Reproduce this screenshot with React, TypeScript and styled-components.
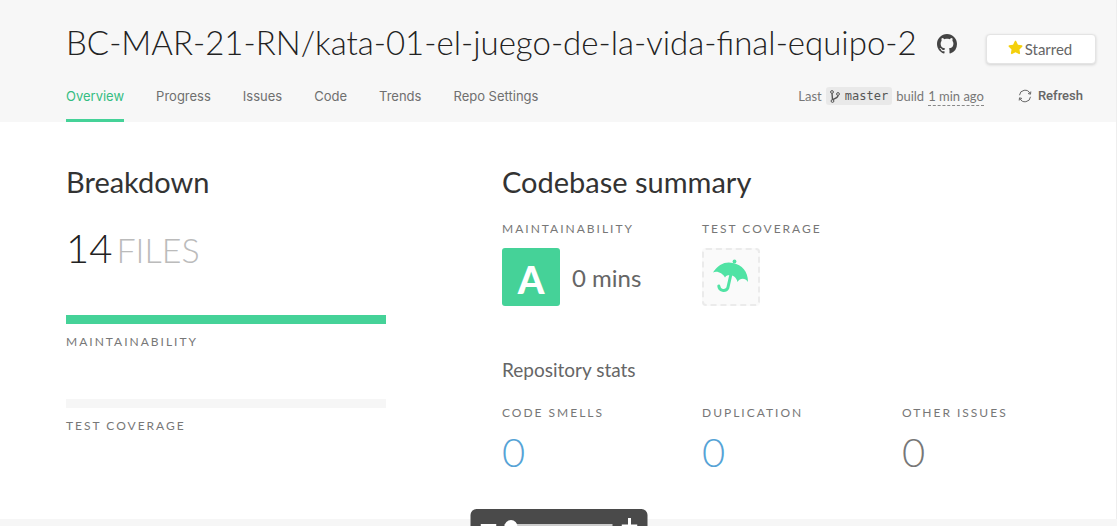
import React from "react";
import styled, { createGlobalStyle, css } from "styled-components";
import { FaStar } from "react-icons/fa";

const sans = `"Lato", "Liberation Sans", sans-serif`;

const GlobalStyle = createGlobalStyle`
  * { box-sizing: border-box; }
  html { background: #f6f6f6; }
  body { margin: 0; font-family: ${sans}; color: #666; overflow-x: hidden; }
  h1, h2, h3, p, dl, dd, dt { margin: 0; font-weight: 400; }
  a { color: inherit; text-decoration: none; }
  button { font-family: inherit; cursor: pointer; }
`;

const Page = styled.div`
  border-right: 1px solid #eee;
`;

const Header = styled.header`
  background: #f7f7f7;
  padding: 18px 20px 0 66px;
`;

const TitleRow = styled.div`
  display: flex;
  align-items: center;
  height: 48px;
`;

const Title = styled.h1`
  && { font-weight: 300; }
  font-size: 33px;
  line-height: 48px;
  color: #222;
  white-space: nowrap;
`;

const RepoLink = styled.a`
  display: flex;
  margin: 4px 0 0 20px;
  color: #444;
`;

const StarButton = styled.button`
  display: flex;
  flex-shrink: 0;
  align-items: center;
  justify-content: center;
  gap: 2px;
  width: 110px;
  height: 30px;
  margin-left: auto;
  margin-top: 14px;
  padding: 0 2px 0 0;
  border: 1px solid #e4e4e4;
  border-radius: 4px;
  background: #fff;
  box-shadow: 0 1px 3px rgba(0, 0, 0, 0.15);
  font-size: 15px;
  color: #666;
  svg { color: #f4d00c; margin-bottom: 4px; }
`;

const NavRow = styled.div`
  display: flex;
  justify-content: space-between;
  margin-top: 16px;
  padding-right: 13px;
  font-size: 13px;
  line-height: 28px;
`;

const Tabs = styled.nav`
  display: flex;
  gap: 32px;
`;

const Tab = styled.a<{ $active?: boolean }>`
  height: 40px;
  border-bottom: 3px solid ${(p) => (p.$active ? "#45d298" : "transparent")};
  color: ${(p) => (p.$active ? "#35bd82" : "#6f6f6f")};
  font-family: Inter, sans-serif;
`;

const BuildInfo = styled.div`
  display: flex;
  align-items: center;
  height: 28px;
  gap: 4px;
  color: #777;
`;

const Branch = styled.code`
  display: flex;
  align-items: center;
  gap: 5px;
  height: 18px;
  padding: 0 4px;
  border-radius: 3px;
  background: #e9e9e9;
  font: 12px/18px "DejaVu Sans Mono", monospace;
  color: #555;
`;

const BuildLink = styled.a`
  line-height: 18px;
  border-bottom: 1px dashed #888;
`;

const RefreshButton = styled.button`
  display: flex;
  align-items: center;
  gap: 6px;
  margin-left: 30px;
  padding: 0;
  border: 0;
  background: none;
  font: 500 13px/28px Roboto, sans-serif;
  color: #666;
`;

const Main = styled.main`
  display: grid;
  grid-template-columns: minmax(0, 8fr) minmax(0, 15fr);
  column-gap: 116px;
  padding: 42px 14px 43px 66px;
  background: #fff;
`;

const Heading = styled.h2`
  font-size: 29px;
  line-height: 36px;
  color: #333;
`;

const FileCount = styled.p`
  display: flex;
  align-items: baseline;
  gap: 4px;
  && { font-weight: 300; margin-top: 20px; }
  font-size: 40px;
  line-height: 56px;
  color: #222;
  span { font-size: 34px; color: #bbb; }
`;

const Meter = styled.figure<{ $filled?: boolean }>`
  margin: 0;
  &::before {
    content: "";
    display: block;
    height: 9px;
    background: ${(p) => (p.$filled ? "#45d298" : "#f6f6f6")};
  }
`;

const Meters = styled.div`
  display: grid;
  gap: 49px;
  margin-top: 37px;
`;

const label = css`
  font-size: 12px;
  line-height: 16px;
  letter-spacing: 2px;
  text-transform: uppercase;
  color: #777;
`;

const MeterLabel = styled.figcaption`
  ${label}
  margin-top: 10px;
`;

const Stats = styled.dl`
  display: grid;
  grid-template-columns: repeat(3, 1fr);
`;

const Term = styled.dt`
  ${label}
`;

const Rating = styled.dd`
  display: flex;
  align-items: center;
  gap: 12px;
  && { margin-top: 11px; }
  font-size: 24px;
`;

const Grade = styled.span`
  display: flex;
  align-items: center;
  justify-content: center;
  width: 58px;
  height: 58px;
  padding-top: 4px;
  border-radius: 3px;
  background: #45d298;
  color: #fff;
  font: 900 38px/54px ${sans};
`;

const CoverageLink = styled.a`
  display: flex;
  align-items: center;
  justify-content: center;
  width: 58px;
  height: 58px;
  border: 2px dashed #ebebeb;
  border-radius: 4px;
  background: #fafafa;
  color: #50e3a4;
`;

const Ratings = styled(Stats)`
  && { margin-top: 21px; }
`;

const Subheading = styled.h3`
  && { margin: 52px 0 23px; }
  font-size: 19px;
  line-height: 24px;
`;

const Count = styled.dd<{ $link?: boolean }>`
  && { margin-top: 7px; font-weight: 300; }
  font-size: 40px;
  line-height: 48px;
  color: ${(p) => (p.$link ? "#56a3d6" : "#777")};
`;

const ZoomBar = styled.div`
  position: fixed;
  left: 50%;
  bottom: -17px;
  transform: translateX(-50%);
  display: flex;
  align-items: center;
  justify-content: space-between;
  width: 177px;
  height: 34px;
  padding: 0 10px;
  border-radius: 6px;
  background: #4a4a4a;
`;

const ZoomButton = styled.button`
  display: flex;
  padding: 0;
  border: 0;
  background: none;
  color: #fff;
`;

const ZoomRange = styled.input`
  appearance: none;
  width: 108px;
  height: 4px;
  margin: 0;
  background: #ccc;
  &::-webkit-slider-thumb {
    appearance: none;
    width: 13px;
    height: 13px;
    border-radius: 50%;
    background: #fff;
  }
`;

const GithubIcon = () => (
  <svg width="20" height="20" viewBox="0 0 16 16" fill="currentColor" aria-hidden="true">
    <path d="M8 0C3.580 0 0 3.580 0 8c0 3.540 2.290 6.530 5.470 7.590.4.070.55-.17.55-.38 0-.19-.01-.82-.01-1.490-2.010.37-2.530-.49-2.690-.94-.09-.23-.48-.94-.82-1.130-.28-.15-.68-.52-.01-.53.63-.01 1.080.58 1.230.82.72 1.210 1.870.87 2.330.66.07-.52.28-.87.51-1.070-1.780-.2-3.640-.89-3.640-3.950 0-.87.31-1.590.82-2.150-.08-.2-.36-1.020.08-2.120 0 0 .67-.21 2.200.82.64-.18 1.320-.27 2-.27s1.360.09 2 .27c1.530-1.040 2.200-.82 2.200-.82.44 1.100.16 1.920.08 2.120.51.56.82 1.270.82 2.150 0 3.070-1.870 3.750-3.650 3.950.29.25.54.73.54 1.480 0 1.070-.01 1.930-.01 2.200 0 .21.15.46.55.38A8.013 8.013 0 0 0 16 8c0-4.420-3.580-8-8-8z" />
  </svg>
);

const UmbrellaIcon = () => (
  <svg width="36" height="36" viewBox="0 0 36 36" fill="currentColor" aria-hidden="true">
    <circle cx="21.5" cy="2.5" r="1.9" />
    <path d="M0 13.500C5 5 13 2 20 4C29 6 35 12 35 23C32 18.500 27 19 24.500 23C23 16 15 14 12 18.500C9.500 14 4 11.500 0 13.500z" />
    <path d="M18 15L14.800 29A4.800 4.800 0 0 1 5.800 27" fill="none" stroke="currentColor" strokeWidth="3" strokeLinecap="round" />
  </svg>
);

const BranchIcon = () => (
  <svg width="10" height="13" viewBox="0 0 10 13" fill="none" stroke="currentColor" aria-hidden="true">
    <circle cx="2" cy="2" r="1.4" />
    <circle cx="2.5" cy="11" r="1.4" />
    <circle cx="8" cy="4" r="1.4" />
    <path d="M2 3.5l.5 6M8 5.5c0 2.500-4 3-5.500 4.500" strokeWidth="1.4" />
  </svg>
);

const RefreshIcon = () => (
  <svg width="14" height="14" viewBox="0 0 14 14" fill="none" stroke="currentColor" aria-hidden="true">
    <path d="M1.500 6.200A5.500 5.500 0 0 1 12 4.500M12.500 7.800A5.500 5.500 0 0 1 2 9.500M12.800 2.500L12.500 5.200L10 4.500M1.200 11.500L1.500 8.800L4 9.500" />
  </svg>
);

const tabs = ["Overview", "Progress", "Issues", "Code", "Trends", "Repo Settings"];
const counts = [
  { name: "Code smells", value: 0, link: true },
  { name: "Duplication", value: 0, link: true },
  { name: "Other issues", value: 0, link: false },
];

export default function App() {
  return (
    <Page>
      <GlobalStyle />
      <Header>
        <TitleRow>
          <Title>BC-MAR-21-RN/kata-01-el-juego-de-la-vida-final-equipo-2</Title>
          <RepoLink href="#github" aria-label="GitHub"><GithubIcon /></RepoLink>
          <StarButton type="button"><FaStar size={15} />Starred</StarButton>
        </TitleRow>
        <NavRow>
          <Tabs>
            {tabs.map((t, i) => <Tab key={t} href="#tab" $active={i === 0}>{t}</Tab>)}
          </Tabs>
          <BuildInfo>
            <span>Last</span>
            <Branch><BranchIcon />master</Branch>
            <span>build</span>
            <BuildLink href="#build">1 min ago</BuildLink>
            <RefreshButton type="button"><RefreshIcon />Refresh</RefreshButton>
          </BuildInfo>
        </NavRow>
      </Header>
      <Main>
        <section>
          <Heading>Breakdown</Heading>
          <FileCount>14 <span>FILES</span></FileCount>
          <Meters>
            <Meter $filled><MeterLabel>Maintainability</MeterLabel></Meter>
            <Meter><MeterLabel>Test coverage</MeterLabel></Meter>
          </Meters>
        </section>
        <section>
          <Heading>Codebase summary</Heading>
          <Ratings>
            <div><Term>Maintainability</Term><Rating><Grade>A</Grade>0 mins</Rating></div>
            <div><Term>Test coverage</Term><Rating><CoverageLink href="#coverage" aria-label="Set up test coverage"><UmbrellaIcon /></CoverageLink></Rating></div>
          </Ratings>
          <Subheading>Repository stats</Subheading>
          <Stats>
            {counts.map((c) => (
              <div key={c.name}><Term>{c.name}</Term><Count $link={c.link}>{c.link ? <a href="#issues">{c.value}</a> : c.value}</Count></div>
            ))}
          </Stats>
        </section>
      </Main>
      <ZoomBar>
        <ZoomButton type="button" aria-label="Zoom out"><svg width="16" height="16" stroke="#fff" strokeWidth="4"><path d="M0 8h16" /></svg></ZoomButton>
        <ZoomRange type="range" aria-label="Zoom" defaultValue={0} />
        <ZoomButton type="button" aria-label="Zoom in"><svg width="16" height="16" stroke="#fff" strokeWidth="3"><path d="M0 8h16M8 0v16" /></svg></ZoomButton>
      </ZoomBar>
    </Page>
  );
}
